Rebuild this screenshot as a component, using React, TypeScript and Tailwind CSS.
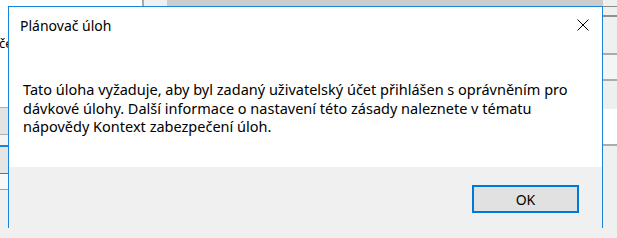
import React from 'react'

// dialog body text, broken as in the original window
const MESSAGE = [
  'Tato úloha vyžaduje, aby byl zadaný uživatelský účet přihlášen s oprávněním pro',
  'dávkové úlohy. Další informace o nastavení této zásady naleznete v tématu',
  'nápovědy Kontext zabezpečení úloh.',
]

function CloseIcon() {
  return (
    <svg width="12" height="12" viewBox="0 0 12 12" className="block">
      <path d="M0.5 0.5 L11.5 11.5 M11.5 0.5 L0.5 11.5" stroke="#000" strokeWidth="1" fill="none" />
    </svg>
  )
}

export default function App() {
  return (
    <div className="relative w-[617px] h-[238px] overflow-hidden bg-[#f0f0f0] font-['Noto_Sans','Open_Sans',sans-serif]">
      {/* window behind the dialog */}
      <div className="flex flex-col h-full">
        <div className="flex h-[6px] shrink-0">
          <div className="w-[142px] bg-white" />
          <div className="w-[2px] bg-[#a9a9a9]" />
          <div className="w-[23px] bg-[#f0f0f0]" />
          <div className="w-[436px] bg-[#cccccc]" />
          <div className="flex-1 bg-[#f0f0f0]" />
        </div>
        <div className="flex flex-1">
          <div className="w-[8px] flex flex-col">
            <div className="h-[101px] bg-white overflow-hidden">
              <div className="mt-[29px] -ml-[1px] text-[13px] leading-[16px] text-black whitespace-nowrap">če</div>
            </div>
            <div className="h-[1px] bg-[#b0b0b0]" />
            <div className="h-[26px] bg-[#e3e3e3]" />
            <div className="h-[1px] bg-[#b0b0b0]" />
            <div className="h-[10px] bg-[#f5f5f5]" />
            <div className="h-[2px] bg-[#1a84d8]" />
            <div className="h-[26px] bg-[#e5e5e5]" />
            <div className="h-[1px] bg-[#1a84d8]" />
            <div className="h-[15px] bg-[#f8f8f8]" />
            <div className="h-[1px] bg-[#a0a0a0]" />
            <div className="flex-1 bg-[#f0f0f0]" />
          </div>
          <div className="flex-1" />
          <div className="w-[14px] flex flex-col">
            <div className="h-[1px] bg-[#8a8a8a]" />
            <div className="h-[8px] bg-[#f0f0f0]" />
            <div className="h-[2px] bg-[#909090]" />
            <div className="h-[36px] bg-[#f0f0f0]" />
            <div className="h-[2px] bg-[#ababab]" />
            <div className="h-[24px] bg-[#f5f5f5]" />
            <div className="h-[2px] bg-[#ababab]" />
            <div className="h-[28px] bg-[#efefef]" />
            <div className="h-[35px] bg-white" />
            <div className="h-[2px] bg-[#ababab]" />
            <div className="flex-1 bg-[#f0f0f0]" />
          </div>
        </div>
      </div>

      {/* Plánovač úloh dialog */}
      <div className="absolute left-[8px] top-[6px] w-[595px] h-[222px] flex flex-col bg-white border-l border-t border-r border-[#1a84d8]">
        <div className="h-[36px] flex items-center justify-between pl-[11px] pr-[13px]">
          <span className="text-[14px] text-black">Plánovač úloh</span>
          <CloseIcon />
        </div>
        <div className="flex-1 pl-[14px] pt-[37px]">
          <p className="text-[14.5px] leading-[18.5px] text-black whitespace-nowrap">
            {MESSAGE.map((line, i) => (
              <span key={i} className="block">{line}</span>
            ))}
          </p>
        </div>
        <div className="h-[61px] bg-[#f0f0f0] flex justify-end items-start pt-[18px] pr-[23px]">
          <button className="w-[107px] h-[28px] border-2 border-[#0078d7] bg-[#e1e1e1] text-[14px] text-black">
            OK
          </button>
        </div>
      </div>
    </div>
  )
}
